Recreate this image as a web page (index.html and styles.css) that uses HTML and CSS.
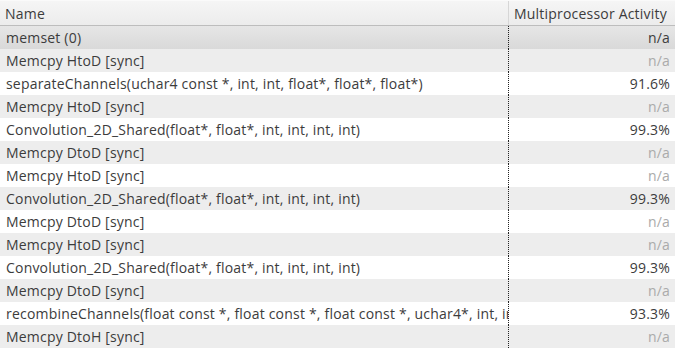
FILE: index.html
```html
<!DOCTYPE html>
<html>
<head>
<meta charset="utf-8">
<link rel="stylesheet" href="styles.css">
</head>
<body>
<div class="table">
  <div class="row head">
    <div class="cell name">Name</div>
    <div class="cell val">Multiprocessor Activity</div>
  </div>
  <div class="row sel"><div class="cell name">memset (0)</div><div class="cell val">n/a</div></div>
  <div class="row alt"><div class="cell name">Memcpy HtoD [sync]</div><div class="cell val na">n/a</div></div>
  <div class="row"><div class="cell name">separateChannels(uchar4 const *, int, int, float*, float*, float*)</div><div class="cell val">91.6%</div></div>
  <div class="row alt"><div class="cell name">Memcpy HtoD [sync]</div><div class="cell val na">n/a</div></div>
  <div class="row"><div class="cell name">Convolution_2D_Shared(float*, float*, int, int, int, int)</div><div class="cell val">99.3%</div></div>
  <div class="row alt"><div class="cell name">Memcpy DtoD [sync]</div><div class="cell val na">n/a</div></div>
  <div class="row"><div class="cell name">Memcpy HtoD [sync]</div><div class="cell val na">n/a</div></div>
  <div class="row alt"><div class="cell name">Convolution_2D_Shared(float*, float*, int, int, int, int)</div><div class="cell val">99.3%</div></div>
  <div class="row"><div class="cell name">Memcpy DtoD [sync]</div><div class="cell val na">n/a</div></div>
  <div class="row alt"><div class="cell name">Memcpy HtoD [sync]</div><div class="cell val na">n/a</div></div>
  <div class="row"><div class="cell name">Convolution_2D_Shared(float*, float*, int, int, int, int)</div><div class="cell val">99.3%</div></div>
  <div class="row alt"><div class="cell name">Memcpy DtoD [sync]</div><div class="cell val na">n/a</div></div>
  <div class="row"><div class="cell name">recombineChannels(float const *, float const *, float const *, uchar4*, int, int)</div><div class="cell val">93.3%</div></div>
  <div class="row alt"><div class="cell name">Memcpy DtoH [sync]</div><div class="cell val na">n/a</div></div>
</div>
</body>
</html>
```
FILE: styles.css
```css
html, body {
  margin: 0;
  padding: 0;
  background: #ffffff;
}
.table {
  width: 675px;
  height: 349px;
  overflow: hidden;
  font-family: "Open Sans", "DejaVu Sans", sans-serif;
  font-size: 14px;
  letter-spacing: 0.2px;
  color: #3c3c3c;
}
.row {
  display: grid;
  grid-template-columns: 509px 1fr;
  height: 23px;
  align-items: stretch;
}
.cell {
  display: flex;
  align-items: center;
  white-space: nowrap;
  overflow: hidden;
}
.name {
  padding-left: 6px;
  border-right: 1px dotted #222;
}
.val {
  justify-content: flex-end;
  padding-right: 5px;
}
.na {
  color: #aaaaaa;
}
.alt {
  background: #ededed;
}
.sel {
  background: linear-gradient(#e6e6e6, #d9d9d9);
}
.head {
  height: 26px;
  box-sizing: border-box;
  border-top: 1px solid #fafafa;
  border-bottom: 1px solid #bdbdbd;
  background: linear-gradient(#f5f5f5, #ececec);
}
.head .name {
  border-right: 1px solid #d6d6d6;
  padding-left: 5px;
}
.head .val {
  justify-content: flex-start;
  padding-left: 5px;
}
```
